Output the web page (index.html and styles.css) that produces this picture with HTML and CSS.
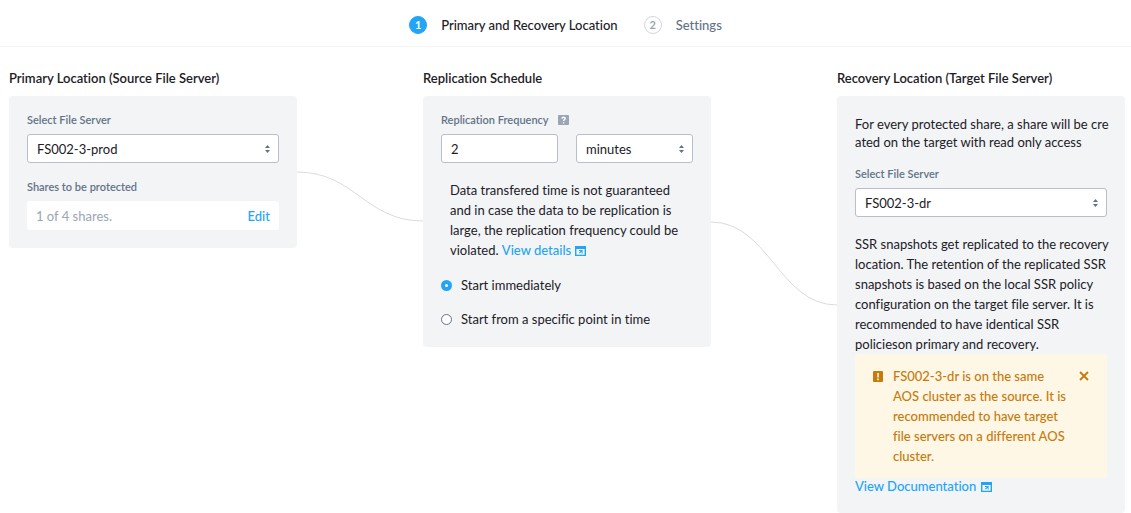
FILE: index.html
```html
<!DOCTYPE html>
<html lang="en">
<head>
<meta charset="utf-8">
<title>Protection Policy</title>
<link rel="stylesheet" href="styles.css">
</head>
<body>
<header class="steps">
  <div class="step step-active"><span class="step-number">1</span><span>Primary and Recovery Location</span></div>
  <div class="step"><span class="step-number">2</span><span>Settings</span></div>
</header>
<main class="flow">
  <section class="column">
    <h2 class="title">Primary Location (Source File Server)</h2>
    <div class="panel">
      <label class="label" for="source">Select File Server</label>
      <div class="select-wrap">
        <select class="control" id="source"><option>FS002-3-prod</option></select>
        <svg class="caret" viewBox="0 0 5 8"><path d="M0 3L2.5 0L5 3ZM0 5L2.5 8L5 5Z"/></svg>
      </div>
      <div class="label label-next">Shares to be protected</div>
      <div class="shares"><span>1 of 4 shares.</span><a class="link" href="#">Edit</a></div>
    </div>
  </section>

  <svg class="connector connector-first" viewBox="0 0 126 52" preserveAspectRatio="none"><path d="M0 1C58 1 68 50 126 50"/></svg>

  <section class="column">
    <h2 class="title">Replication Schedule</h2>
    <div class="panel">
      <div class="label-row">
        <label class="label" for="frequency">Replication Frequency</label>
        <svg class="help" viewBox="0 0 11 10"><rect width="11" height="10" rx="1"/><path d="M4 3.7C4 1.8 7.2 1.8 7.2 3.6C7.2 4.8 5.6 4.7 5.6 6M5.6 7.2V8.4"/></svg>
      </div>
      <div class="fields">
        <input class="control" id="frequency" type="text" value="2">
        <div class="select-wrap">
          <select class="control" aria-label="Frequency unit"><option>minutes</option></select>
          <svg class="caret" viewBox="0 0 5 8"><path d="M0 3L2.5 0L5 3ZM0 5L2.5 8L5 5Z"/></svg>
        </div>
      </div>
      <p class="note">Data transfered time is not guaranteed<br>and in case the data to be replication is<br>large, the replication frequency could be<br>violated. <a class="link" href="#">View details <svg class="window" viewBox="0 0 11 10"><path d="M0 0H11V10H0ZM1.4 3V8.7H9.6V3Z"/><path d="M4 4H7.6V7.6H6.6V5.8L4.7 7.6L3.9 6.8L5.8 5H4Z"/></svg></a></p>
      <label class="choice"><input class="radio" type="radio" name="start" checked>Start immediately</label>
      <label class="choice"><input class="radio" type="radio" name="start">Start from a specific point in time</label>
    </div>
  </section>

  <svg class="connector connector-second" viewBox="0 0 126 86" preserveAspectRatio="none"><path d="M0 1C58 1 68 84 126 84"/></svg>

  <section class="column">
    <h2 class="title">Recovery Location (Target File Server)</h2>
    <div class="panel">
      <p class="intro">For every protected share, a share will be cre<br>ated on the target with read only access</p>
      <label class="label" for="target">Select File Server</label>
      <div class="select-wrap">
        <select class="control" id="target"><option>FS002-3-dr</option></select>
        <svg class="caret" viewBox="0 0 5 8"><path d="M0 3L2.5 0L5 3ZM0 5L2.5 8L5 5Z"/></svg>
      </div>
      <p class="details">SSR snapshots get replicated to the recovery<br>location. The retention of the replicated SSR<br>snapshots is based on the local SSR policy<br>configuration on the target file server. It is<br>recommended to have identical SSR<br>policieson primary and recovery.</p>
      <div class="warning" role="alert">
        <svg class="warning-icon" viewBox="0 0 10 11"><rect width="10" height="11" rx="1"/><path d="M5 2V6.4M5 7.6V9.2"/></svg>
        <p class="warning-text">FS002-3-dr is on the same<br>AOS cluster as the source. It is<br>recommended to have target<br>file servers on a different AOS<br>cluster.</p>
        <button class="close" type="button" aria-label="Close"><svg class="cross" viewBox="0 0 10 10"><path d="M1 1L9 9M9 1L1 9"/></svg></button>
      </div>
      <a class="link docs" href="#">View Documentation <svg class="window" viewBox="0 0 11 10"><path d="M0 0H11V10H0ZM1.4 3V8.7H9.6V3Z"/><path d="M4 4H7.6V7.6H6.6V5.8L4.7 7.6L3.9 6.8L5.8 5H4Z"/></svg></a>
    </div>
  </section>
</main>
</body>
</html>
```
FILE: styles.css
```css
* { box-sizing: border-box; }
body {
  margin: 0;
  background: #fff;
  color: #1c2026;
  font: 400 13px/20px Lato, "Liberation Sans", sans-serif;
  font-variant-ligatures: none;
}
p, h2 { margin: 0; }
svg { display: block; flex: none; }
.steps {
  display: flex;
  justify-content: center;
  gap: 26px;
  padding: 15px 0 11px;
  border-bottom: 1px solid #f2f4f6;
  font-weight: 500;
}
.step { display: flex; align-items: center; gap: 14px; color: #627386; }
.step-active { color: #1c2026; }
.step-number {
  display: grid;
  place-items: center;
  width: 18px;
  height: 18px;
  border: 1px solid #d1d5de;
  border-radius: 50%;
  color: #9aa5b5;
  font-size: 11px;
  line-height: 16px;
  font-weight: 700;
}
.step-active .step-number { background: #22a5f7; border-color: #22a5f7; color: #fff; }
.flow {
  display: grid;
  grid-template-columns: 1fr 126px 1fr 126px 1fr;
  align-items: start;
  padding: 21px 6px 0 9px;
}
.column { min-width: 0; }
.title { margin-bottom: 8px; font-size: 13px; line-height: 20px; font-weight: 600; white-space: nowrap; }
.panel { padding: 18px; border-radius: 4px; background: #f2f4f6; }
.label { display: block; margin-bottom: 8px; color: #627386; font-size: 11px; line-height: 12px; font-weight: 600; }
.label-next { margin-top: 18px; }
.label-row { display: flex; gap: 9px; }
.help { width: 11px; height: 10px; margin-top: 1px; fill: #9aa5b5; }
.help path { fill: none; stroke: #fff; stroke-width: 1.4; }
.fields { display: grid; grid-template-columns: 1fr 1fr; gap: 18px; }
.select-wrap { position: relative; }
.control {
  display: block;
  width: 100%;
  height: 29px;
  padding: 0 9px;
  border: 1px solid #b8bfca;
  border-radius: 3px;
  background: #fff;
  color: inherit;
  font: inherit;
  appearance: none;
}
.caret { position: absolute; top: 11px; right: 9px; width: 5px; height: 8px; fill: #627386; pointer-events: none; }
.shares {
  display: flex;
  justify-content: space-between;
  align-items: center;
  height: 29px;
  padding: 0 9px;
  border-radius: 3px;
  background: #fff;
  color: #9aa5b5;
}
.link { color: #22a5f7; font-weight: 500; text-decoration: none; }
.window { display: inline-block; width: 11px; height: 10px; margin-left: 1px; vertical-align: -1px; fill: #22a5f7; fill-rule: evenodd; }
.note { margin: 17px 0 15px 9px; white-space: nowrap; }
.choice { display: flex; align-items: center; gap: 9px; }
.choice + .choice { margin-top: 14px; }
.radio {
  width: 11px;
  height: 11px;
  margin: 0;
  border: 1px solid #627386;
  border-radius: 50%;
  background: #fff;
  appearance: none;
}
.radio:checked { border: 4px solid #22a5f7; }
.connector { width: 100%; fill: none; stroke: #d8dbe3; stroke-width: 1; }
.connector-first { height: 52px; margin-top: 103px; }
.connector-second { height: 86px; margin-top: 153px; }
.intro { padding: 1px 0 17px; line-height: 18px; white-space: nowrap; }
.details { margin-top: 17px; white-space: nowrap; }
.warning {
  display: flex;
  padding: 12px 18px;
  background: #fff7e6;
  color: #c67a0b;
}
.warning-icon { width: 10px; height: 11px; margin-top: 5px; fill: #c67a0b; }
.warning-icon path { stroke: #fff7e6; stroke-width: 1.6; }
.warning-text { flex: 1; margin-left: 10px; font-weight: 500; white-space: nowrap; }
.close { align-self: flex-start; height: 20px; padding: 0; border: 0; background: none; color: inherit; }
.cross { width: 10px; height: 10px; stroke: currentColor; stroke-width: 1.8; }
.docs { display: block; line-height: 17px; }
```
